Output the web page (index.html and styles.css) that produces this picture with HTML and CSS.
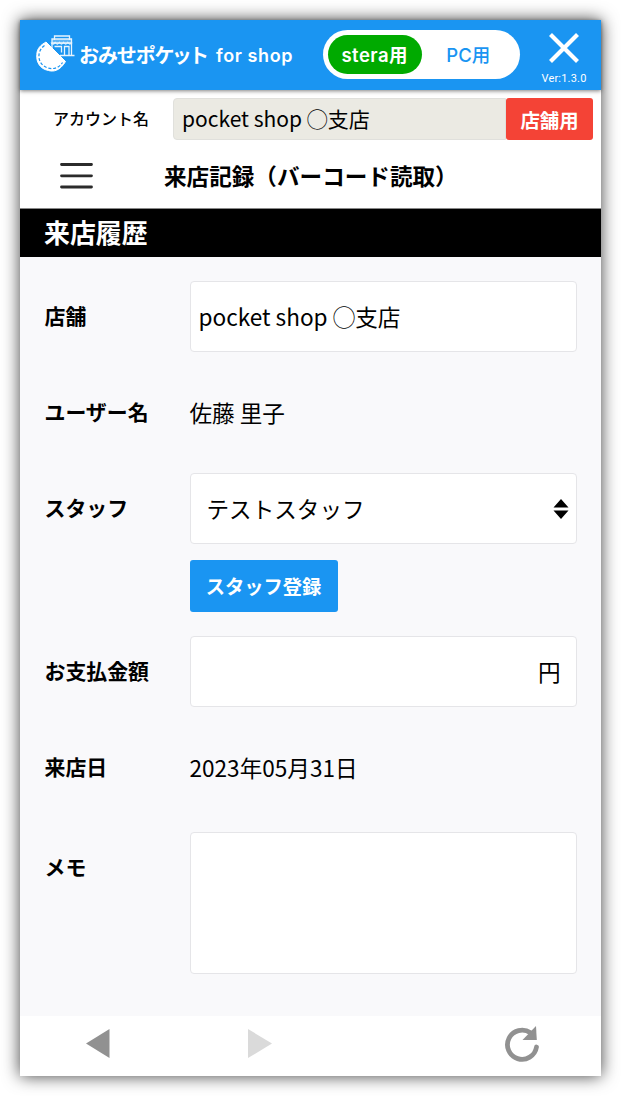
FILE: index.html
```
<!DOCTYPE html>
<html lang="ja">
<head>
    <meta charset="UTF-8">
    <meta name="viewport" content="width=device-width, initial-scale=1.0">
    <title>おみせポケット for shop</title>
    <link rel="stylesheet" href="styles.css">
</head>
<body>
    <div class="app">
        <header class="header">
            <svg class="logo-icon" width="40" height="39" viewBox="0 0 40 39" fill="none" stroke="#fff">
                <g stroke-width="1.3" opacity="0.9">
                    <path d="M18.5 5V1h15v4"/>
                    <path d="M16 4h19.500v4h-19.500z" fill="#fff" fill-opacity="0.35"/>
                    <path d="M15 7.500q2 3 4.200 0q2.100 3 4.200 0q2.100 3 4.200 0q2.100 3 4.200 0q2.100 3 4.200 0"/>
                    <path d="M35.500 8v13M16 8v5M18.500 11.500h7v6M28.500 20.500v-9h4.500v9M24 20.500h14.500"/>
                </g>
                <path d="M10 7L29.500 26.500C24 36 17 37 12.500 35.500C4 34 0 27 .8 19.500C1 13 5 10 10 7z" fill="#fff" stroke="#fff" stroke-linejoin="round"/>
                <path d="M8.500 10.500C-.5 17 2 30 11.500 32.800C18 35 24 32 26.500 27.500" stroke="#1a95f2" stroke-width="1.200" stroke-dasharray="3 1.800"/>
            </svg>
            <h1 class="logo-text"><span class="logo-kana">おみせポ<span class="tight">ケット</span></span><span class="logo-en">for shop</span></h1>
            <div class="mode-switch">
                <span class="mode active">stera用</span>
                <span class="mode">PC用</span>
            </div>
            <div class="close">
                <svg width="30" height="30" viewBox="0 0 30 30" stroke="#fff" stroke-width="4.200">
                    <path d="M1.500 1.500l27 27M28.500 1.500l-27 27"/>
                </svg>
                <span>Ver:1.3.0</span>
            </div>
        </header>

        <div class="account">
            <span class="account-label">アカウント名</span>
            <span class="account-name">pocket shop ◯支店</span>
            <span class="account-tag">店舗用</span>
        </div>

        <div class="title-bar">
            <svg class="menu" width="34" height="28" viewBox="0 0 34 28" stroke="#2b2b2b" stroke-width="2.800" stroke-linecap="round">
                <path d="M1.500 2.500h30M1.500 13.800h30M1.500 25h30"/>
            </svg>
            <h2>来店記録（バーコード読取）</h2>
        </div>

        <h3 class="section-title">来店履歴</h3>

        <form class="form">
            <div class="row">
                <label>店舗</label>
                <div class="box">pocket shop ◯支店</div>
            </div>
            <div class="row">
                <label>ユーザー名</label>
                <div class="value">佐藤 里子</div>
            </div>
            <div class="row staff">
                <label>スタッフ</label>
                <div>
                    <div class="box select">
                        テストスタッフ
                        <svg width="16" height="20" viewBox="0 0 16 20" fill="#000">
                            <path d="M8 0l7.500 8.400H.5zM8 20l7.500-8.400H.5z"/>
                        </svg>
                    </div>
                    <button type="button">スタッフ登録</button>
                </div>
            </div>
            <div class="row">
                <label>お支払金額</label>
                <div class="box amount">円</div>
            </div>
            <div class="row">
                <label>来店日</label>
                <div class="value">2023年05月31日</div>
            </div>
            <div class="row memo">
                <label>メモ</label>
                <div class="box textarea"></div>
            </div>
        </form>

        <footer class="footer">
            <svg width="24" height="29" viewBox="0 0 24 29"><path d="M0 14.500L23.500 0v29z" fill="#919191"/></svg>
            <svg class="next" width="24" height="29" viewBox="0 0 24 29"><path d="M24 14.500L0 0v29z" fill="#dadada"/></svg>
            <svg class="reload" width="35" height="36" viewBox="0 0 35 36">
                <path d="M31.500 21A14.600 14.600 0 1 1 25.500 6.800" fill="none" stroke="#919191" stroke-width="4.800" stroke-linecap="round"/>
                <path d="M31 0l.8 14H17.500z" fill="#919191"/>
            </svg>
        </footer>
    </div>
</body>
</html>
```
FILE: styles.css
```
* {
    box-sizing: border-box;
}

body {
    margin: 0;
    padding: 20px;
    background-color: #fff;
    color: #000;
    font-family: "Noto Sans CJK JP", sans-serif;
}

.app {
    width: 581px;
    height: 1056px;
    display: flex;
    flex-direction: column;
    background-color: #fff;
    box-shadow: 0 0 16px rgba(0, 0, 0, 0.75);
}

h1, h2, h3 {
    margin: 0;
}

svg {
    display: block;
    flex: none;
}

.header {
    height: 70px;
    flex: none;
    display: flex;
    background-color: #1a95f2;
    color: #fff;
    box-shadow: 0 1px 4px rgba(0, 0, 0, 0.5);
}

.logo-icon {
    margin: 15px 0 0 16px;
}

.logo-text {
    display: flex;
    width: 244px;
    margin: 21px 0 0 3px;
    font-size: 20px;
    line-height: 28px;
    font-weight: bold;
    white-space: nowrap;
}

.logo-kana {
    width: 137px;
    letter-spacing: -1.1px;
}

.logo-kana .tight {
    letter-spacing: -2.8px;
}

.logo-en {
    font-family: Inter, sans-serif;
    font-size: 18px;
    line-height: 29px;
    font-weight: 600;
    letter-spacing: 0.6px;
}

.mode-switch {
    display: flex;
    width: 197px;
    height: 49px;
    margin-top: 10px;
    padding: 5px;
    border-radius: 25px;
    background-color: #fff;
}

.mode {
    width: 94px;
    height: 39px;
    border-radius: 20px;
    color: #1a95f2;
    font-family: Inter, "Noto Sans CJK JP", sans-serif;
    font-size: 18.5px;
    line-height: 41px;
    font-weight: 500;
    text-align: center;
}

.mode.active {
    background-color: #00aa00;
    color: #fff;
    font-weight: 600;
    letter-spacing: 0.5px;
}

.close {
    display: flex;
    flex-direction: column;
    align-items: center;
    width: 60px;
    margin-left: 14px;
    padding-top: 13px;
    font-family: Roboto, sans-serif;
    font-size: 11px;
    line-height: 12px;
    letter-spacing: 0.2px;
}

.close span {
    margin-top: 10px;
}

.account {
    display: flex;
    height: 58px;
    flex: none;
    padding: 8px 8px 0 33px;
}

.account-label {
    width: 120px;
    font-size: 16px;
    line-height: 40px;
    font-weight: 500;
}

.account-name {
    flex: 1;
    height: 42px;
    padding-left: 8px;
    border: 1px solid #e0e0dc;
    border-radius: 4px 0 0 4px;
    background-color: #ebeae3;
    font-size: 21px;
    line-height: 39px;
}

.account-tag {
    width: 87px;
    height: 42px;
    border-radius: 3px;
    background-color: #f44336;
    color: #fff;
    font-size: 19.4px;
    line-height: 43px;
    font-weight: bold;
    text-align: center;
}

.title-bar {
    display: flex;
    height: 61px;
    flex: none;
    padding-left: 40px;
    border-bottom: 1px solid #888;
}

.menu {
    margin-top: 14px;
}

.title-bar h2 {
    margin-left: 70px;
    font-size: 22.6px;
    line-height: 56px;
    font-weight: bold;
    white-space: nowrap;
}

.section-title {
    height: 48px;
    flex: none;
    padding-left: 24px;
    background-color: #000;
    color: #fff;
    font-size: 25.9px;
    line-height: 46px;
}

.form {
    flex: 1;
    display: flex;
    flex-direction: column;
    gap: 25px;
    padding: 24px 24px 0 24.500px;
    background-color: #f9f9fb;
}

.row {
    display: grid;
    grid-template-columns: 145px 387px;
    height: 71px;
    flex: none;
    font-size: 22.6px;
    line-height: 69px;
}

.row label {
    font-size: 20.9px;
    font-weight: bold;
}

.value {
    line-height: 71px;
}

.box {
    height: 71px;
    padding: 0 8px;
    border: 1px solid #e5e5e8;
    border-radius: 4px;
    background-color: #fff;
}

.staff {
    height: 138px;
}

.select {
    display: flex;
    justify-content: space-between;
    align-items: center;
    padding: 0 7px 0 16px;
}

.amount {
    padding-right: 15px;
    text-align: right;
}

.memo {
    height: 142px;
    margin-top: 4px;
}

.textarea {
    height: 142px;
}

button {
    display: block;
    width: 148px;
    height: 52px;
    margin-top: 16px;
    padding: 0;
    border: none;
    border-radius: 3px;
    background-color: #1a95f2;
    color: #fff;
    font-family: inherit;
    font-size: 19.3px;
    font-weight: bold;
}

.footer {
    display: flex;
    height: 60px;
    flex: none;
    padding: 13px 0 0 66px;
}

.next {
    margin-left: 138px;
}

.reload {
    margin: -3px 0 0 233px;
}
```
